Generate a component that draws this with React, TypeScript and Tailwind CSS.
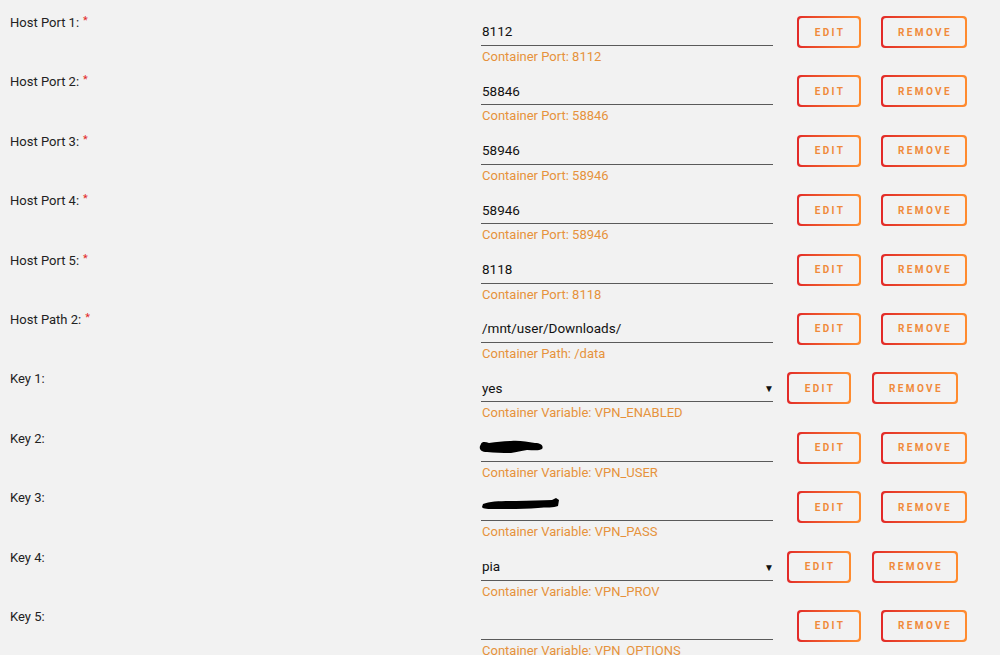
import React from 'react'

type Row = {
  label: string
  required?: boolean
  value?: string
  hint: string
  select?: boolean
  masked?: 'short' | 'long'
}

const rows: Row[] = [
  { label: 'Host Port 1:', required: true, value: '8112', hint: 'Container Port: 8112' },
  { label: 'Host Port 2:', required: true, value: '58846', hint: 'Container Port: 58846' },
  { label: 'Host Port 3:', required: true, value: '58946', hint: 'Container Port: 58946' },
  { label: 'Host Port 4:', required: true, value: '58946', hint: 'Container Port: 58946' },
  { label: 'Host Port 5:', required: true, value: '8118', hint: 'Container Port: 8118' },
  { label: 'Host Path 2:', required: true, value: '/mnt/user/Downloads/', hint: 'Container Path: /data' },
  { label: 'Key 1:', value: 'yes', hint: 'Container Variable: VPN_ENABLED', select: true },
  { label: 'Key 2:', hint: 'Container Variable: VPN_USER', masked: 'short' },
  { label: 'Key 3:', hint: 'Container Variable: VPN_PASS', masked: 'long' },
  { label: 'Key 4:', value: 'pia', hint: 'Container Variable: VPN_PROV', select: true },
  { label: 'Key 5:', value: '', hint: 'Container Variable: VPN_OPTIONS' },
]

function GradientButton({ text, width }: { text: string; width: string }) {
  return (
    <div className={`rounded-[4px] bg-linear-to-r from-[#e22828] to-[#ff8c2f] p-[2px] h-[32px] shrink-0 ${width}`}>
      <div className="w-full h-full rounded-[3px] bg-[#f2f2f2] flex items-center justify-center">
        <span className="text-[10px] font-bold tracking-[2.4px] text-[#f08a3a] pl-[2px]">{text}</span>
      </div>
    </div>
  )
}

// hand-drawn marker strokes hiding the secret values
function Scribble({ kind }: { kind: 'short' | 'long' }) {
  if (kind === 'short') {
    return (
      <svg width="70" height="18" viewBox="0 0 70 18" className="absolute left-[-4px] top-[6px]">
        <path d="M4 6 C5 3 9 4 12 5 C20 4 26 3 34 3 C42 2 50 4 58 5 C64 5 67 8 65 11 C62 13 56 12 50 12 C44 13 40 14 34 15 C26 15 18 15 10 14 C4 14 2 11 3 8 Z" fill="#000" />
      </svg>
    )
  }
  return (
    <svg width="82" height="16" viewBox="0 0 82 16" className="absolute left-[-1px] top-[6px]">
      <path d="M3 7 C10 4 22 4 36 4 C50 4 62 3 72 3 L76 1 L79 3 L78 9 C74 11 66 10 58 11 C46 12 30 12 16 12 C8 12 3 12 2 10 Z" fill="#000" />
    </svg>
  )
}

function FieldRow({ row }: { row: Row }) {
  return (
    <div className="flex h-[59.4px] pt-[16px] shrink-0">
      <div className="w-[481px] shrink-0 pl-[10px] text-[13px] text-[#222] leading-[14px]">
        {row.label}
        {row.required && <span className="text-[#e22828] text-[11px] relative top-[-3px] ml-[4px]">*</span>}
      </div>
      <div className="w-[292px] shrink-0 flex flex-col">
        <div className="relative h-[30px] shrink-0 border-b border-[#5a5a5a] flex items-center pt-[2px] pl-[1px] text-[13.5px] text-[#111]">
          {row.masked ? <Scribble kind={row.masked} /> : <span>{row.value}</span>}
          {row.select && <span className="absolute right-[-1px] top-[9px] text-[10px] text-[#111]">▼</span>}
        </div>
        <div className="shrink-0 pt-[3px] pl-[1px] text-[13px] text-[#e6923c] leading-[16px] whitespace-nowrap">{row.hint}</div>
      </div>
      <div className={`flex ${row.select ? 'ml-[14px] gap-[21px]' : 'ml-[24px] gap-[20px]'}`}>
        <GradientButton text="EDIT" width="w-[64px]" />
        <GradientButton text="REMOVE" width="w-[86px]" />
      </div>
    </div>
  )
}

export default function App() {
  return (
    <div className="w-[1000px] h-[655px] overflow-hidden bg-[#f2f2f2] font-['Roboto',sans-serif]">
      {rows.map((row) => (
        <FieldRow key={row.label} row={row} />
      ))}
    </div>
  )
}
